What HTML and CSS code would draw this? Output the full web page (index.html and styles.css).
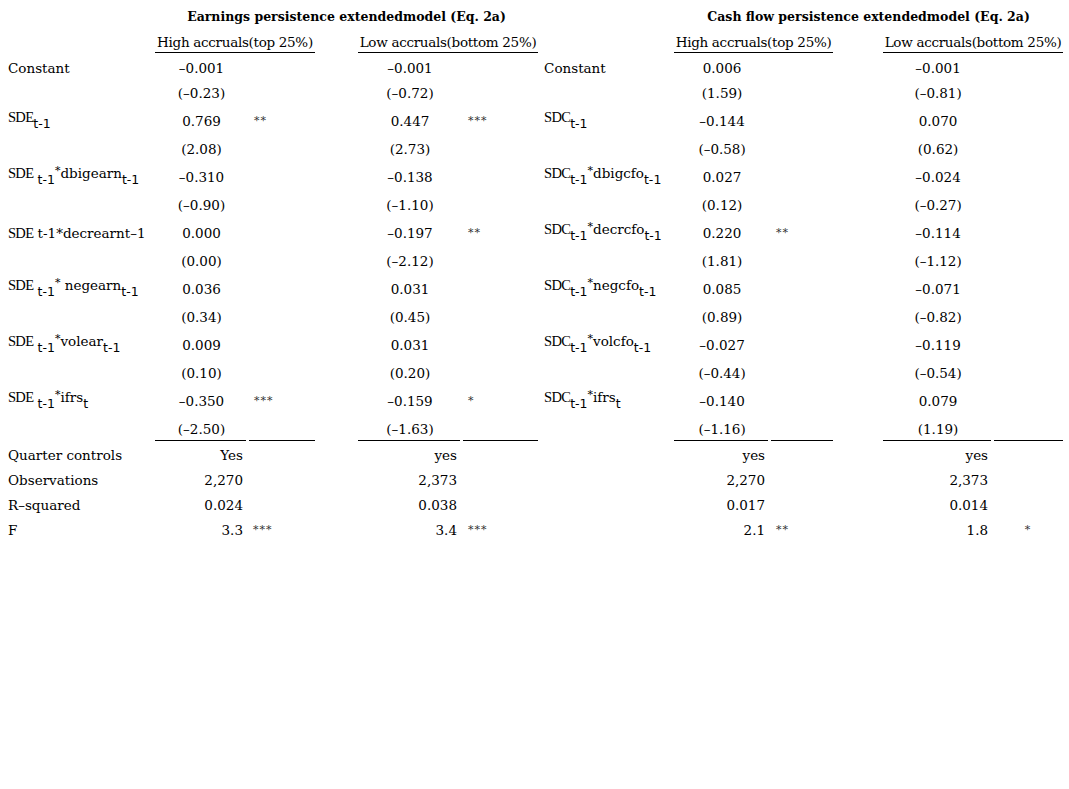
FILE: index.html
```html
<!DOCTYPE html>
<html>
<head>
<meta charset="utf-8">
<link rel="stylesheet" href="styles.css">
</head>
<body>
<table class="reg">
  <colgroup>
    <col class="c-lab-l"><col class="c-hv-l"><col class="c-hs-l"><col class="c-gap1"><col class="c-lv-l"><col class="c-ls-l">
    <col class="c-gap2"><col class="c-lab-r"><col class="c-hv-r"><col class="c-hs-r"><col class="c-gap3"><col class="c-lv-r"><col class="c-ls-r">
  </colgroup>
  <tr class="r-title">
    <td></td>
    <td colspan="5" class="title">Earnings persistence extendedmodel (Eq. 2a)</td>
    <td></td><td></td>
    <td colspan="5" class="title">Cash flow persistence extendedmodel (Eq. 2a)</td>
  </tr>
  <tr class="r-head">
    <td></td>
    <td colspan="2" class="head">High accruals(top 25%)</td>
    <td></td>
    <td colspan="2" class="head">Low accruals(bottom 25%)</td>
    <td></td><td></td>
    <td colspan="2" class="head">High accruals(top 25%)</td>
    <td></td>
    <td colspan="2" class="head">Low accruals(bottom 25%)</td>
  </tr>
  <tr class="r-first">
    <td class="lab">Constant</td><td class="v">–0.001</td><td></td><td></td><td class="v">–0.001</td><td></td>
    <td></td><td class="lab">Constant</td><td class="v">0.006</td><td></td><td></td><td class="v">–0.001</td><td></td>
  </tr>
  <tr class="r-second">
    <td></td><td class="v">(–0.23)</td><td></td><td></td><td class="v">(–0.72)</td><td></td>
    <td></td><td></td><td class="v">(1.59)</td><td></td><td></td><td class="v">(–0.81)</td><td></td>
  </tr>
  <tr class="r">
    <td class="lab"><span class="tm">SDE</span><sub>t-1</sub></td><td class="v">0.769</td><td class="s">**</td><td></td><td class="v">0.447</td><td class="s">***</td>
    <td></td><td class="lab"><span class="tm">SDC</span><sub>t-1</sub></td><td class="v">–0.144</td><td></td><td></td><td class="v">0.070</td><td></td>
  </tr>
  <tr class="r">
    <td></td><td class="v">(2.08)</td><td></td><td></td><td class="v">(2.73)</td><td></td>
    <td></td><td></td><td class="v">(–0.58)</td><td></td><td></td><td class="v">(0.62)</td><td></td>
  </tr>
  <tr class="r">
    <td class="lab"><span class="tm">SDE</span> <sub>t-1</sub><sup>*</sup>dbigearn<sub>t-1</sub></td><td class="v">–0.310</td><td></td><td></td><td class="v">–0.138</td><td></td>
    <td></td><td class="lab"><span class="tm">SDC</span><sub>t-1</sub><sup>*</sup>dbigcfo<sub>t-1</sub></td><td class="v">0.027</td><td></td><td></td><td class="v">–0.024</td><td></td>
  </tr>
  <tr class="r">
    <td></td><td class="v">(–0.90)</td><td></td><td></td><td class="v">(–1.10)</td><td></td>
    <td></td><td></td><td class="v">(0.12)</td><td></td><td></td><td class="v">(–0.27)</td><td></td>
  </tr>
  <tr class="r">
    <td class="lab plain"><span class="tm">SDE</span> t-1*decrearnt–1</td><td class="v">0.000</td><td></td><td></td><td class="v">–0.197</td><td class="s">**</td>
    <td></td><td class="lab"><span class="tm">SDC</span><sub>t-1</sub><sup>*</sup>decrcfo<sub>t-1</sub></td><td class="v">0.220</td><td class="s">**</td><td></td><td class="v">–0.114</td><td></td>
  </tr>
  <tr class="r">
    <td></td><td class="v">(0.00)</td><td></td><td></td><td class="v">(–2.12)</td><td></td>
    <td></td><td></td><td class="v">(1.81)</td><td></td><td></td><td class="v">(–1.12)</td><td></td>
  </tr>
  <tr class="r">
    <td class="lab"><span class="tm">SDE</span> <sub>t-1</sub><sup>*</sup> negearn<sub>t-1</sub></td><td class="v">0.036</td><td></td><td></td><td class="v">0.031</td><td></td>
    <td></td><td class="lab"><span class="tm">SDC</span><sub>t-1</sub><sup>*</sup>negcfo<sub>t-1</sub></td><td class="v">0.085</td><td></td><td></td><td class="v">–0.071</td><td></td>
  </tr>
  <tr class="r">
    <td></td><td class="v">(0.34)</td><td></td><td></td><td class="v">(0.45)</td><td></td>
    <td></td><td></td><td class="v">(0.89)</td><td></td><td></td><td class="v">(–0.82)</td><td></td>
  </tr>
  <tr class="r">
    <td class="lab"><span class="tm">SDE</span> <sub>t-1</sub><sup>*</sup>volear<sub>t-1</sub></td><td class="v">0.009</td><td></td><td></td><td class="v">0.031</td><td></td>
    <td></td><td class="lab"><span class="tm">SDC</span><sub>t-1</sub><sup>*</sup>volcfo<sub>t-1</sub></td><td class="v">–0.027</td><td></td><td></td><td class="v">–0.119</td><td></td>
  </tr>
  <tr class="r">
    <td></td><td class="v">(0.10)</td><td></td><td></td><td class="v">(0.20)</td><td></td>
    <td></td><td></td><td class="v">(–0.44)</td><td></td><td></td><td class="v">(–0.54)</td><td></td>
  </tr>
  <tr class="r">
    <td class="lab"><span class="tm">SDE</span> <sub>t-1</sub><sup>*</sup>ifrs<sub>t</sub></td><td class="v">–0.350</td><td class="s">***</td><td></td><td class="v">–0.159</td><td class="s">*</td>
    <td></td><td class="lab"><span class="tm">SDC</span><sub>t-1</sub><sup>*</sup>ifrs<sub>t</sub></td><td class="v">–0.140</td><td></td><td></td><td class="v">0.079</td><td></td>
  </tr>
  <tr class="r r-last">
    <td></td><td class="v ul-v">(–2.50)</td><td class="ul-s"></td><td></td><td class="v ul-v">(–1.63)</td><td class="ul-s"></td>
    <td></td><td></td><td class="v ul-v">(–1.16)</td><td class="ul-s"></td><td></td><td class="v ul-v">(1.19)</td><td class="ul-s"></td>
  </tr>
  <tr class="f f-first">
    <td class="lab">Quarter controls</td><td class="n">Yes</td><td></td><td></td><td class="n">yes</td><td></td>
    <td></td><td></td><td class="n">yes</td><td></td><td></td><td class="n">yes</td><td></td>
  </tr>
  <tr class="f">
    <td class="lab">Observations</td><td class="n">2,270</td><td></td><td></td><td class="n">2,373</td><td></td>
    <td></td><td></td><td class="n">2,270</td><td></td><td></td><td class="n">2,373</td><td></td>
  </tr>
  <tr class="f">
    <td class="lab">R–squared</td><td class="n">0.024</td><td></td><td></td><td class="n">0.038</td><td></td>
    <td></td><td></td><td class="n">0.017</td><td></td><td></td><td class="n">0.014</td><td></td>
  </tr>
  <tr class="f">
    <td class="lab">F</td><td class="n">3.3</td><td class="s s-tight">***</td><td></td><td class="n">3.4</td><td class="s">***</td>
    <td></td><td></td><td class="n">2.1</td><td class="s">**</td><td></td><td class="n">1.8</td><td class="s s-center">*</td>
  </tr>
</table>
</body>
</html>
```

FILE: styles.css
```css
html, body {
  margin: 0;
  padding: 0;
  background: #ffffff;
  color: #000000;
}

body {
  padding: 9px 0 0 8px;
  font-family: "DejaVu Serif", "Liberation Serif", serif;
  font-size: 13.5px;
}

.reg {
  border-collapse: separate;
  border-spacing: 0;
  table-layout: fixed;
  width: 1055px;
}

.reg td {
  padding: 0;
  vertical-align: top;
  line-height: 16px;
  white-space: nowrap;
}

.c-lab-l { width: 147px; }
.c-hv-l { width: 93px; }
.c-hs-l { width: 67px; }
.c-gap1 { width: 43px; }
.c-lv-l { width: 104px; }
.c-ls-l { width: 76px; }
.c-gap2 { width: 6px; }
.c-lab-r { width: 130px; }
.c-hv-r { width: 96px; }
.c-hs-r { width: 63px; }
.c-gap3 { width: 50px; }
.c-lv-r { width: 110px; }
.c-ls-r { width: 70px; }

.r-title td { height: 25px; }

.title {
  text-align: center;
  font-weight: bold;
  font-size: 12.5px;
}

.r-head td { height: 18px; }

.head {
  text-align: center;
  letter-spacing: -0.3px;
  border-bottom: 1px solid #000;
}

.r-first td { height: 25px; padding-top: 7px; }
.r-second td { height: 24px; }
.r td { height: 24px; padding-top: 4px; }
.r td.lab { padding-top: 0; height: 28px; }
.r td.lab.plain { padding-top: 4px; height: 24px; }
.r-last td { height: 20px; }

.ul-v {
  background: linear-gradient(#000, #000) no-repeat left bottom / calc(100% - 2px) 1px;
}
.ul-s {
  background: linear-gradient(#000, #000) no-repeat right bottom / calc(100% - 1px) 1px;
}

.f td { height: 25px; }
.f-first td { height: 25px; padding-top: 6px; }

.v { text-align: center; }
.n { text-align: right; padding-right: 5px !important; }
.s { padding-left: 6px !important; font-size: 11px; letter-spacing: 1px; color: #333; }
.s-tight { padding-left: 5px !important; }
.s-center { text-align: center; padding-left: 0 !important; }

.tm {
  font-family: "Liberation Serif", serif;
  font-size: 14.5px;
  letter-spacing: -0.7px;
}

sub {
  font-family: "DejaVu Sans", sans-serif;
  font-size: 12.5px;
  vertical-align: -6px;
  line-height: 0;
}

sup {
  font-size: 11px;
  vertical-align: 4px;
  line-height: 0;
}
```
